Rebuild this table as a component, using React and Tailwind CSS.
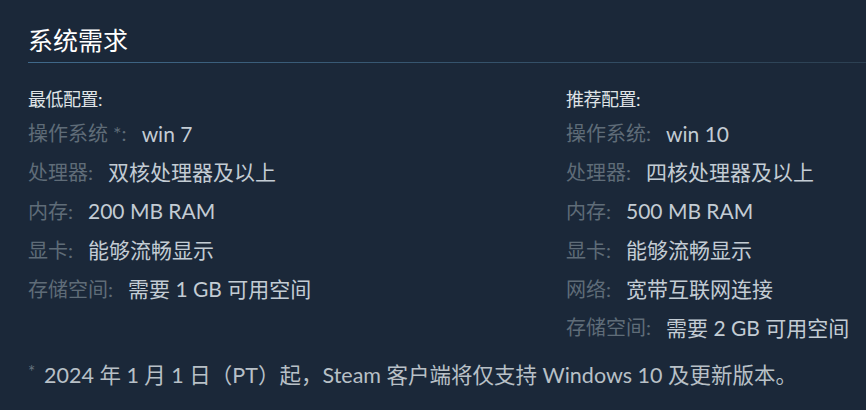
import React from 'react';

const cjk = "font-['Lato','Noto_Sans_CJK_SC',sans-serif]";

const minReq = [
  ['操作系统 *:', 'win 7'],
  ['处理器:', '双核处理器及以上'],
  ['内存:', '200 MB RAM'],
  ['显卡:', '能够流畅显示'],
  ['存储空间:', '需要 1 GB 可用空间'],
];

const recReq = [
  ['操作系统:', 'win 10'],
  ['处理器:', '四核处理器及以上'],
  ['内存:', '500 MB RAM'],
  ['显卡:', '能够流畅显示'],
  ['网络:', '宽带互联网连接'],
  ['存储空间:', '需要 2 GB 可用空间'],
];

const ReqColumn = ({ title, rows }) => (
  <div className="flex flex-col">
    <div className="h-[30px] flex items-center text-[18px] text-[#dfe3e6] tracking-[-0.5px]">{title}</div>
    <ul className="flex flex-col">
      {rows.map(([label, value], i) => (
        <li key={i} className="h-[38.8px] flex items-center whitespace-nowrap">
          <span className="text-[20px] text-[#5f6c78]">{label}</span>
          <span className="text-[21px] text-[#c3ccd4] ml-[15px]">{value}</span>
        </li>
      ))}
    </ul>
  </div>
);

const App = () => {
  return (
    <div className={`w-[866px] h-[410px] bg-[#1b2839] overflow-hidden pl-[28px] ${cjk}`}>
      <div className="pt-[22px]">
        <h2 className="text-[25px] leading-[36px] text-white font-normal">系统需求</h2>
        <div className="mt-[4px] h-px bg-gradient-to-r from-[#40698a] to-[#2c4052]" />
      </div>
      <div className="mt-[21px] grid grid-cols-[538px_1fr]">
        <ReqColumn title="最低配置:" rows={minReq} />
        <ReqColumn title="推荐配置:" rows={recReq} />
      </div>
      <p className="mt-[12px] flex items-center whitespace-nowrap">
        <span className="text-[#67737e] text-[17px] leading-none -translate-y-[3px] w-[16px]">*</span>
        <span className="text-[21.5px] text-[#b8c0c7]">2024 年 1 月 1 日（PT）起，Steam 客户端将仅支持 Windows 10 及更新版本。</span>
      </p>
    </div>
  );
};

export default App;
